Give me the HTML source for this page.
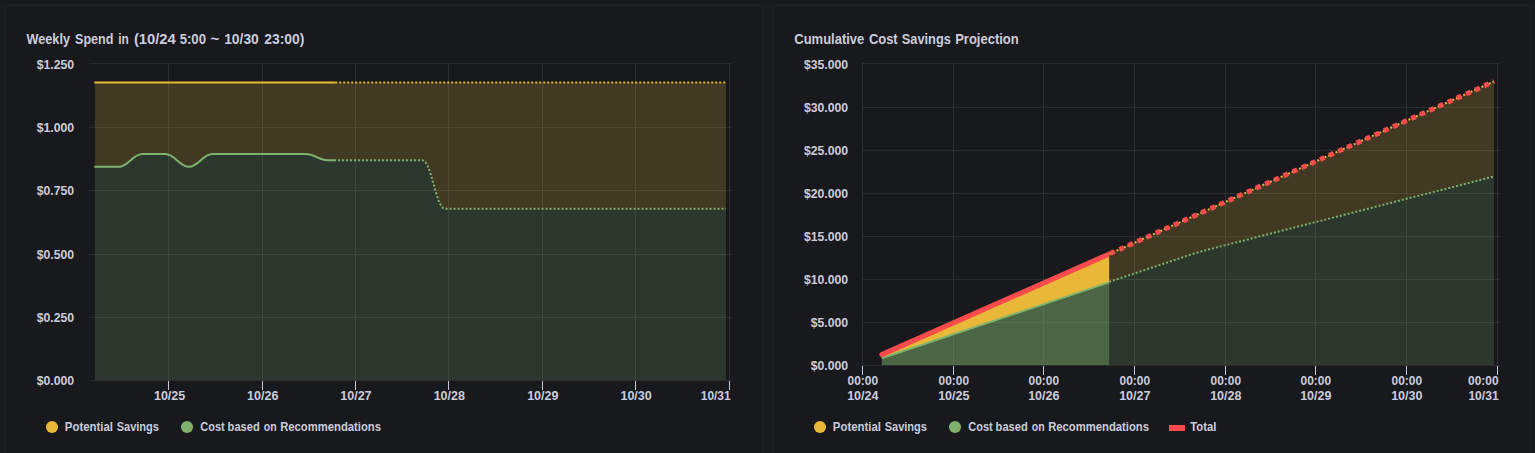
<!DOCTYPE html><html><head><meta charset="utf-8"><title>Dashboard</title>
<style>html,body{margin:0;padding:0;background:#18191d;}body{width:1535px;height:453px;overflow:hidden;}svg{display:block}text{font-family:"Liberation Sans", sans-serif;fill:#ccccdc;}</style>
</head><body>
<svg width="1535" height="453" viewBox="0 0 1535 453">
<rect x="0" y="0" width="1535" height="453" fill="#18191d"/>
<rect x="5.5" y="5.5" width="757" height="470" rx="1.5" fill="none" stroke="#232428"/>
<rect x="773.5" y="5.5" width="757" height="470" rx="1.5" fill="none" stroke="#232428"/>
<g stroke="#2c2d30" stroke-width="1" shape-rendering="crispEdges">
<line x1="89" x2="732" y1="63.5" y2="63.5"/>
<line x1="89" x2="732" y1="127.5" y2="127.5"/>
<line x1="89" x2="732" y1="190.5" y2="190.5"/>
<line x1="89" x2="732" y1="254.5" y2="254.5"/>
<line x1="89" x2="732" y1="317.5" y2="317.5"/>
<line x1="89" x2="732" y1="380.5" y2="380.5"/>
<line x1="168.5" x2="168.5" y1="63" y2="381"/>
<line x1="262.5" x2="262.5" y1="63" y2="381"/>
<line x1="355.5" x2="355.5" y1="63" y2="381"/>
<line x1="448.5" x2="448.5" y1="63" y2="381"/>
<line x1="542.5" x2="542.5" y1="63" y2="381"/>
<line x1="635.5" x2="635.5" y1="63" y2="381"/>
<line x1="729.5" x2="729.5" y1="63" y2="381"/>
</g>
<g stroke="#c5c9de" stroke-width="1" shape-rendering="crispEdges">
<line x1="168.5" x2="168.5" y1="381" y2="390"/>
<line x1="262.5" x2="262.5" y1="381" y2="390"/>
<line x1="355.5" x2="355.5" y1="381" y2="390"/>
<line x1="448.5" x2="448.5" y1="381" y2="390"/>
<line x1="542.5" x2="542.5" y1="381" y2="390"/>
<line x1="635.5" x2="635.5" y1="381" y2="390"/>
<line x1="729.5" x2="729.5" y1="381" y2="390"/>
</g>
<clipPath id="cl"><rect x="95.0" y="60" width="631.0" height="320.3"/></clipPath>
<g clip-path="url(#cl)">
<path d="M94.30,166.80 L118.75,166.80 C128.10,166.80 132.78,154.00 142.13,154.00 L165.50,154.00 C174.85,154.00 179.53,166.80 188.88,166.80 C198.23,166.80 202.90,154.00 212.25,154.00 L305.75,154.00 C314.54,154.00 318.94,160.20 327.73,160.20 L422.30,160.20 C431.38,160.20 435.92,208.70 445.00,208.70 L726.00,208.70 L726.0,380.3 L94.3,380.3 Z" fill="#7EB26D" fill-opacity="0.2"/>
<path d="M94.30,166.80 L118.75,166.80 C128.10,166.80 132.78,154.00 142.13,154.00 L165.50,154.00 C174.85,154.00 179.53,166.80 188.88,166.80 C198.23,166.80 202.90,154.00 212.25,154.00 L305.75,154.00 C314.54,154.00 318.94,160.20 327.73,160.20 L422.30,160.20 C431.38,160.20 435.92,208.70 445.00,208.70 L726.00,208.70 L726.0,82.4 L94.3,82.4 Z" fill="#EAB839" fill-opacity="0.2"/>
</g>
<path d="M94.30,166.80 L118.75,166.80 C128.10,166.80 132.78,154.00 142.13,154.00 L165.50,154.00 C174.85,154.00 179.53,166.80 188.88,166.80 C198.23,166.80 202.90,154.00 212.25,154.00 L305.75,154.00 C314.54,154.00 318.94,160.20 327.73,160.20 L334.10,160.20" fill="none" stroke="#7EB26D" stroke-width="2" stroke-linejoin="round"/>
<path d="M334.10,160.20 L422.30,160.20 C431.38,160.20 435.92,208.70 445.00,208.70 L726.00,208.70" fill="none" stroke="#7EB26D" stroke-width="2" stroke-dasharray="2 2"/>
<path d="M94.3,82.4 L335.2,82.4" fill="none" stroke="#EAB839" stroke-width="2"/>
<path d="M335.2,82.4 L726.0,82.4" fill="none" stroke="#EAB839" stroke-width="2" stroke-dasharray="2 2"/>
<text x="26.40" y="43.80" font-size="14" font-weight="bold" text-anchor="start" textLength="43.60" lengthAdjust="spacingAndGlyphs">Weekly</text>
<text x="75.10" y="43.80" font-size="14" font-weight="bold" text-anchor="start" textLength="38.30" lengthAdjust="spacingAndGlyphs">Spend</text>
<text x="118.30" y="43.80" font-size="14" font-weight="bold" text-anchor="start" textLength="10.60" lengthAdjust="spacingAndGlyphs">in</text>
<text x="133.90" y="43.80" font-size="14" font-weight="bold" text-anchor="start" textLength="41.90" lengthAdjust="spacingAndGlyphs">(10/24</text>
<text x="179.70" y="43.80" font-size="14" font-weight="bold" text-anchor="start" textLength="26.30" lengthAdjust="spacingAndGlyphs">5:00</text>
<text x="210.50" y="43.80" font-size="14" font-weight="bold" text-anchor="start" textLength="8.80" lengthAdjust="spacingAndGlyphs">~</text>
<text x="224.20" y="43.80" font-size="14" font-weight="bold" text-anchor="start" textLength="34.60" lengthAdjust="spacingAndGlyphs">10/30</text>
<text x="264.30" y="43.80" font-size="14" font-weight="bold" text-anchor="start" textLength="40.10" lengthAdjust="spacingAndGlyphs">23:00)</text>
<text x="74.20" y="68.90" font-size="12" font-weight="bold" text-anchor="end" textLength="37.50" lengthAdjust="spacingAndGlyphs">$1.250</text>
<text x="74.20" y="131.90" font-size="12" font-weight="bold" text-anchor="end" textLength="37.50" lengthAdjust="spacingAndGlyphs">$1.000</text>
<text x="74.20" y="194.90" font-size="12" font-weight="bold" text-anchor="end" textLength="37.50" lengthAdjust="spacingAndGlyphs">$0.750</text>
<text x="74.20" y="258.90" font-size="12" font-weight="bold" text-anchor="end" textLength="37.50" lengthAdjust="spacingAndGlyphs">$0.500</text>
<text x="74.20" y="321.90" font-size="12" font-weight="bold" text-anchor="end" textLength="37.50" lengthAdjust="spacingAndGlyphs">$0.250</text>
<text x="74.20" y="385.00" font-size="12" font-weight="bold" text-anchor="end" textLength="37.50" lengthAdjust="spacingAndGlyphs">$0.000</text>
<text x="169.60" y="400.00" font-size="12" font-weight="bold" text-anchor="middle" textLength="31.30" lengthAdjust="spacingAndGlyphs">10/25</text>
<text x="262.70" y="400.00" font-size="12" font-weight="bold" text-anchor="middle" textLength="31.30" lengthAdjust="spacingAndGlyphs">10/26</text>
<text x="355.90" y="400.00" font-size="12" font-weight="bold" text-anchor="middle" textLength="31.30" lengthAdjust="spacingAndGlyphs">10/27</text>
<text x="449.30" y="400.00" font-size="12" font-weight="bold" text-anchor="middle" textLength="31.30" lengthAdjust="spacingAndGlyphs">10/28</text>
<text x="542.80" y="400.00" font-size="12" font-weight="bold" text-anchor="middle" textLength="31.30" lengthAdjust="spacingAndGlyphs">10/29</text>
<text x="636.10" y="400.00" font-size="12" font-weight="bold" text-anchor="middle" textLength="31.30" lengthAdjust="spacingAndGlyphs">10/30</text>
<text x="730.60" y="400.00" font-size="12" font-weight="bold" text-anchor="end" textLength="29.80" lengthAdjust="spacingAndGlyphs">10/31</text>
<circle cx="52" cy="427" r="6.05" fill="#EAB839"/>
<text x="64.80" y="430.80" font-size="12" font-weight="bold" text-anchor="start" textLength="48.20" lengthAdjust="spacingAndGlyphs">Potential</text>
<text x="116.70" y="430.80" font-size="12" font-weight="bold" text-anchor="start" textLength="42.30" lengthAdjust="spacingAndGlyphs">Savings</text>
<circle cx="187" cy="427" r="6.05" fill="#7EB26D"/>
<text x="200.20" y="430.80" font-size="12" font-weight="bold" text-anchor="start" textLength="24.50" lengthAdjust="spacingAndGlyphs">Cost</text>
<text x="227.60" y="430.80" font-size="12" font-weight="bold" text-anchor="start" textLength="32.10" lengthAdjust="spacingAndGlyphs">based</text>
<text x="263.70" y="430.80" font-size="12" font-weight="bold" text-anchor="start" textLength="12.90" lengthAdjust="spacingAndGlyphs">on</text>
<text x="280.20" y="430.80" font-size="12" font-weight="bold" text-anchor="start" textLength="100.80" lengthAdjust="spacingAndGlyphs">Recommendations</text>
<g stroke="#2c2d30" stroke-width="1" shape-rendering="crispEdges">
<line x1="862" x2="1500" y1="63.5" y2="63.5"/>
<line x1="862" x2="1500" y1="107.5" y2="107.5"/>
<line x1="862" x2="1500" y1="150.5" y2="150.5"/>
<line x1="862" x2="1500" y1="193.5" y2="193.5"/>
<line x1="862" x2="1500" y1="236.5" y2="236.5"/>
<line x1="862" x2="1500" y1="279.5" y2="279.5"/>
<line x1="862" x2="1500" y1="322.5" y2="322.5"/>
<line x1="862" x2="1500" y1="365.5" y2="365.5"/>
<line x1="862.5" x2="862.5" y1="63" y2="366"/>
<line x1="953.5" x2="953.5" y1="63" y2="366"/>
<line x1="1043.5" x2="1043.5" y1="63" y2="366"/>
<line x1="1134.5" x2="1134.5" y1="63" y2="366"/>
<line x1="1225.5" x2="1225.5" y1="63" y2="366"/>
<line x1="1315.5" x2="1315.5" y1="63" y2="366"/>
<line x1="1406.5" x2="1406.5" y1="63" y2="366"/>
<line x1="1497.5" x2="1497.5" y1="63" y2="366"/>
</g>
<g stroke="#c5c9de" stroke-width="1" shape-rendering="crispEdges">
<line x1="862.5" x2="862.5" y1="366" y2="375"/>
<line x1="953.5" x2="953.5" y1="366" y2="375"/>
<line x1="1043.5" x2="1043.5" y1="366" y2="375"/>
<line x1="1134.5" x2="1134.5" y1="366" y2="375"/>
<line x1="1225.5" x2="1225.5" y1="366" y2="375"/>
<line x1="1315.5" x2="1315.5" y1="366" y2="375"/>
<line x1="1406.5" x2="1406.5" y1="366" y2="375"/>
<line x1="1497.5" x2="1497.5" y1="366" y2="375"/>
</g>
<path d="M881.8,358.2 L1109.2,282.4 L1109.2,365.0 L881.8,365.0 Z" fill="#7EB26D" fill-opacity="0.5"/>
<path d="M881.8,354.6 L1109.2,254.0 L1109.2,282.4 L881.8,358.2 Z" fill="#EAB839"/>
<path d="M1109.2,281.9 L1188.0,255.50 Q1198.0,252.15 1208.0,249.60 L1494.0,176.5 L1494.0,365.0 L1109.2,365.0 Z" fill="#7EB26D" fill-opacity="0.2"/>
<path d="M1109.2,254.0 L1494.0,81.5 L1494.0,176.5 L1208.0,249.60 Q1198.0,252.15 1188.0,255.50 L1109.2,281.9 Z" fill="#EAB839" fill-opacity="0.2"/>
<path d="M881.8,358.2 L1109.2,282.4" fill="none" stroke="#7EB26D" stroke-width="2"/>
<path d="M1109.2,281.9 L1188.0,255.50 Q1198.0,252.15 1208.0,249.60 L1494.0,176.5" fill="none" stroke="#7EB26D" stroke-width="2" stroke-dasharray="2 2"/>
<path d="M1109.2,254.0 L1494.0,81.5" fill="none" stroke="#EAB839" stroke-width="2" stroke-dasharray="2 2"/>
<clipPath id="cs"><rect x="870" y="200" width="239.20000000000005" height="170"/></clipPath>
<path d="M881.8,354.6 L1115.2,251.35" fill="none" stroke="#f94a4c" stroke-width="5" stroke-linecap="round" clip-path="url(#cs)"/>
<path d="M1109.2,254.0 L1494.0,81.5" fill="none" stroke="#f94a4c" stroke-width="5" stroke-dasharray="5 5" stroke-dashoffset="-1"/>
<text x="794.30" y="43.80" font-size="14" font-weight="bold" text-anchor="start" textLength="70.00" lengthAdjust="spacingAndGlyphs">Cumulative</text>
<text x="868.90" y="43.80" font-size="14" font-weight="bold" text-anchor="start" textLength="28.80" lengthAdjust="spacingAndGlyphs">Cost</text>
<text x="901.80" y="43.80" font-size="14" font-weight="bold" text-anchor="start" textLength="49.00" lengthAdjust="spacingAndGlyphs">Savings</text>
<text x="955.20" y="43.80" font-size="14" font-weight="bold" text-anchor="start" textLength="63.50" lengthAdjust="spacingAndGlyphs">Projection</text>
<text x="848.20" y="68.90" font-size="12" font-weight="bold" text-anchor="end" textLength="44.30" lengthAdjust="spacingAndGlyphs">$35.000</text>
<text x="848.20" y="111.90" font-size="12" font-weight="bold" text-anchor="end" textLength="44.30" lengthAdjust="spacingAndGlyphs">$30.000</text>
<text x="848.20" y="154.90" font-size="12" font-weight="bold" text-anchor="end" textLength="44.30" lengthAdjust="spacingAndGlyphs">$25.000</text>
<text x="848.20" y="197.90" font-size="12" font-weight="bold" text-anchor="end" textLength="44.30" lengthAdjust="spacingAndGlyphs">$20.000</text>
<text x="848.20" y="240.90" font-size="12" font-weight="bold" text-anchor="end" textLength="44.30" lengthAdjust="spacingAndGlyphs">$15.000</text>
<text x="848.20" y="283.90" font-size="12" font-weight="bold" text-anchor="end" textLength="44.30" lengthAdjust="spacingAndGlyphs">$10.000</text>
<text x="848.20" y="326.90" font-size="12" font-weight="bold" text-anchor="end" textLength="37.50" lengthAdjust="spacingAndGlyphs">$5.000</text>
<text x="848.20" y="369.90" font-size="12" font-weight="bold" text-anchor="end" textLength="37.50" lengthAdjust="spacingAndGlyphs">$0.000</text>
<text x="862.80" y="385.00" font-size="12" font-weight="bold" text-anchor="middle" textLength="30.50" lengthAdjust="spacingAndGlyphs">00:00</text>
<text x="862.80" y="400.00" font-size="12" font-weight="bold" text-anchor="middle" textLength="31.30" lengthAdjust="spacingAndGlyphs">10/24</text>
<text x="953.80" y="385.00" font-size="12" font-weight="bold" text-anchor="middle" textLength="30.50" lengthAdjust="spacingAndGlyphs">00:00</text>
<text x="953.80" y="400.00" font-size="12" font-weight="bold" text-anchor="middle" textLength="31.30" lengthAdjust="spacingAndGlyphs">10/25</text>
<text x="1043.80" y="385.00" font-size="12" font-weight="bold" text-anchor="middle" textLength="30.50" lengthAdjust="spacingAndGlyphs">00:00</text>
<text x="1043.80" y="400.00" font-size="12" font-weight="bold" text-anchor="middle" textLength="31.30" lengthAdjust="spacingAndGlyphs">10/26</text>
<text x="1134.80" y="385.00" font-size="12" font-weight="bold" text-anchor="middle" textLength="30.50" lengthAdjust="spacingAndGlyphs">00:00</text>
<text x="1134.80" y="400.00" font-size="12" font-weight="bold" text-anchor="middle" textLength="31.30" lengthAdjust="spacingAndGlyphs">10/27</text>
<text x="1225.80" y="385.00" font-size="12" font-weight="bold" text-anchor="middle" textLength="30.50" lengthAdjust="spacingAndGlyphs">00:00</text>
<text x="1225.80" y="400.00" font-size="12" font-weight="bold" text-anchor="middle" textLength="31.30" lengthAdjust="spacingAndGlyphs">10/28</text>
<text x="1315.80" y="385.00" font-size="12" font-weight="bold" text-anchor="middle" textLength="30.50" lengthAdjust="spacingAndGlyphs">00:00</text>
<text x="1315.80" y="400.00" font-size="12" font-weight="bold" text-anchor="middle" textLength="31.30" lengthAdjust="spacingAndGlyphs">10/29</text>
<text x="1406.80" y="385.00" font-size="12" font-weight="bold" text-anchor="middle" textLength="30.50" lengthAdjust="spacingAndGlyphs">00:00</text>
<text x="1406.80" y="400.00" font-size="12" font-weight="bold" text-anchor="middle" textLength="31.30" lengthAdjust="spacingAndGlyphs">10/30</text>
<text x="1498.60" y="385.00" font-size="12" font-weight="bold" text-anchor="end" textLength="30.50" lengthAdjust="spacingAndGlyphs">00:00</text>
<text x="1498.60" y="400.00" font-size="12" font-weight="bold" text-anchor="end" textLength="30.20" lengthAdjust="spacingAndGlyphs">10/31</text>
<circle cx="820" cy="427" r="6.05" fill="#EAB839"/>
<text x="832.80" y="430.80" font-size="12" font-weight="bold" text-anchor="start" textLength="48.20" lengthAdjust="spacingAndGlyphs">Potential</text>
<text x="884.70" y="430.80" font-size="12" font-weight="bold" text-anchor="start" textLength="42.30" lengthAdjust="spacingAndGlyphs">Savings</text>
<circle cx="955" cy="427" r="6.05" fill="#7EB26D"/>
<text x="968.20" y="430.80" font-size="12" font-weight="bold" text-anchor="start" textLength="24.50" lengthAdjust="spacingAndGlyphs">Cost</text>
<text x="995.60" y="430.80" font-size="12" font-weight="bold" text-anchor="start" textLength="32.10" lengthAdjust="spacingAndGlyphs">based</text>
<text x="1031.70" y="430.80" font-size="12" font-weight="bold" text-anchor="start" textLength="12.90" lengthAdjust="spacingAndGlyphs">on</text>
<text x="1048.20" y="430.80" font-size="12" font-weight="bold" text-anchor="start" textLength="100.80" lengthAdjust="spacingAndGlyphs">Recommendations</text>
<rect x="1169" y="425" width="16" height="6" fill="#f94a4c"/>
<text x="1190.20" y="430.80" font-size="12" font-weight="bold" text-anchor="start" textLength="26.20" lengthAdjust="spacingAndGlyphs">Total</text>
</svg></body></html>
